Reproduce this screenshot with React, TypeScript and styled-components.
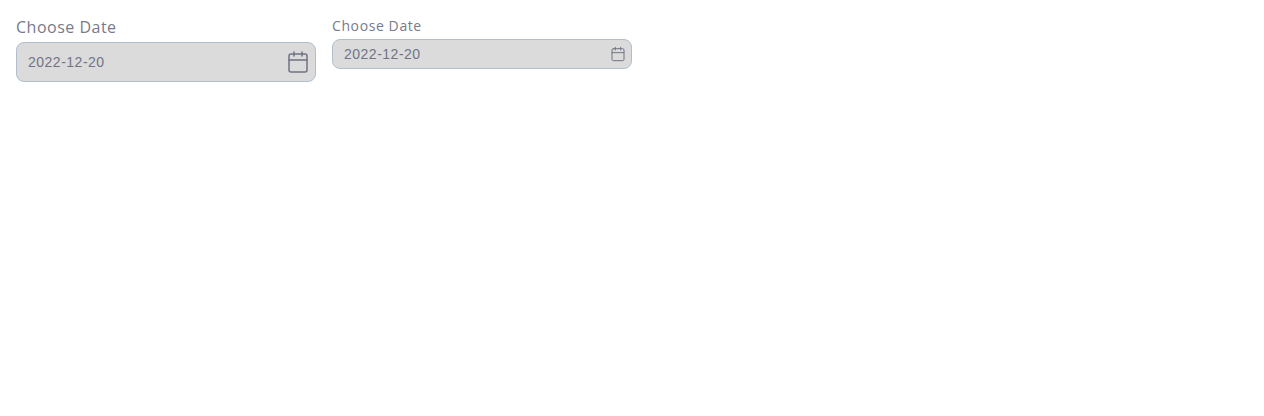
import React from "react";
import styled, { createGlobalStyle } from "styled-components";

type Size = "medium" | "small";

const GlobalStyle = createGlobalStyle`
  *, *::before, *::after { box-sizing: border-box; }
  body { margin: 0; background: #fff; font-family: "Open Sans", sans-serif; }
`;

const Page = styled.main`
  display: flex;
  align-items: flex-start;
  gap: 16px;
  padding: 16px;
`;

const Field = styled.div`
  display: flex;
  flex-direction: column;
  width: 300px;
`;

const Label = styled.label<{ $size: Size }>`
  color: #777a8b;
  font-size: ${(p) => (p.$size === "medium" ? 16 : 14)}px;
  line-height: ${(p) => (p.$size === "medium" ? 22 : 19)}px;
  letter-spacing: ${(p) => (p.$size === "medium" ? 0.5 : 0.6)}px;
  margin-bottom: 4px;
`;

const InputBox = styled.div<{ $size: Size }>`
  display: flex;
  align-items: center;
  height: ${(p) => (p.$size === "medium" ? 40 : 30)}px;
  padding: 0 5px 0 11px;
  border: 1px solid #b0bfce;
  border-radius: 8px;
  background: #dbdbdb;
`;

const Input = styled.input`
  flex: 1;
  min-width: 0;
  padding: 0;
  border: 0;
  background: transparent;
  color: #717384;
  font-family: "Liberation Sans", Arial, sans-serif;
  font-size: 14px;
  letter-spacing: 0.5px;
`;

const Icon = styled.svg`
  flex: none;
  display: block;
  fill: none;
  stroke: #717384;
  stroke-width: 1.5;
  stroke-linecap: round;
  stroke-linejoin: round;
`;

function DateField({ size, id }: { size: Size; id: string }) {
  const iconSize = size === "medium" ? 24 : 16;
  return (
    <Field>
      <Label $size={size} htmlFor={id}>Choose Date</Label>
      <InputBox $size={size}>
        <Input id={id} defaultValue="2022-12-20" disabled />
        <Icon width={iconSize} height={iconSize} viewBox="0 0 24 24">
          <rect x="3" y="4" width="18" height="18" rx="2" />
          <path d="M16 2v4M8 2v4M3 10h18" />
        </Icon>
      </InputBox>
    </Field>
  );
}

export default function App() {
  return (
    <>
      <GlobalStyle />
      <Page>
        <DateField size="medium" id="date-medium" />
        <DateField size="small" id="date-small" />
      </Page>
    </>
  );
}
